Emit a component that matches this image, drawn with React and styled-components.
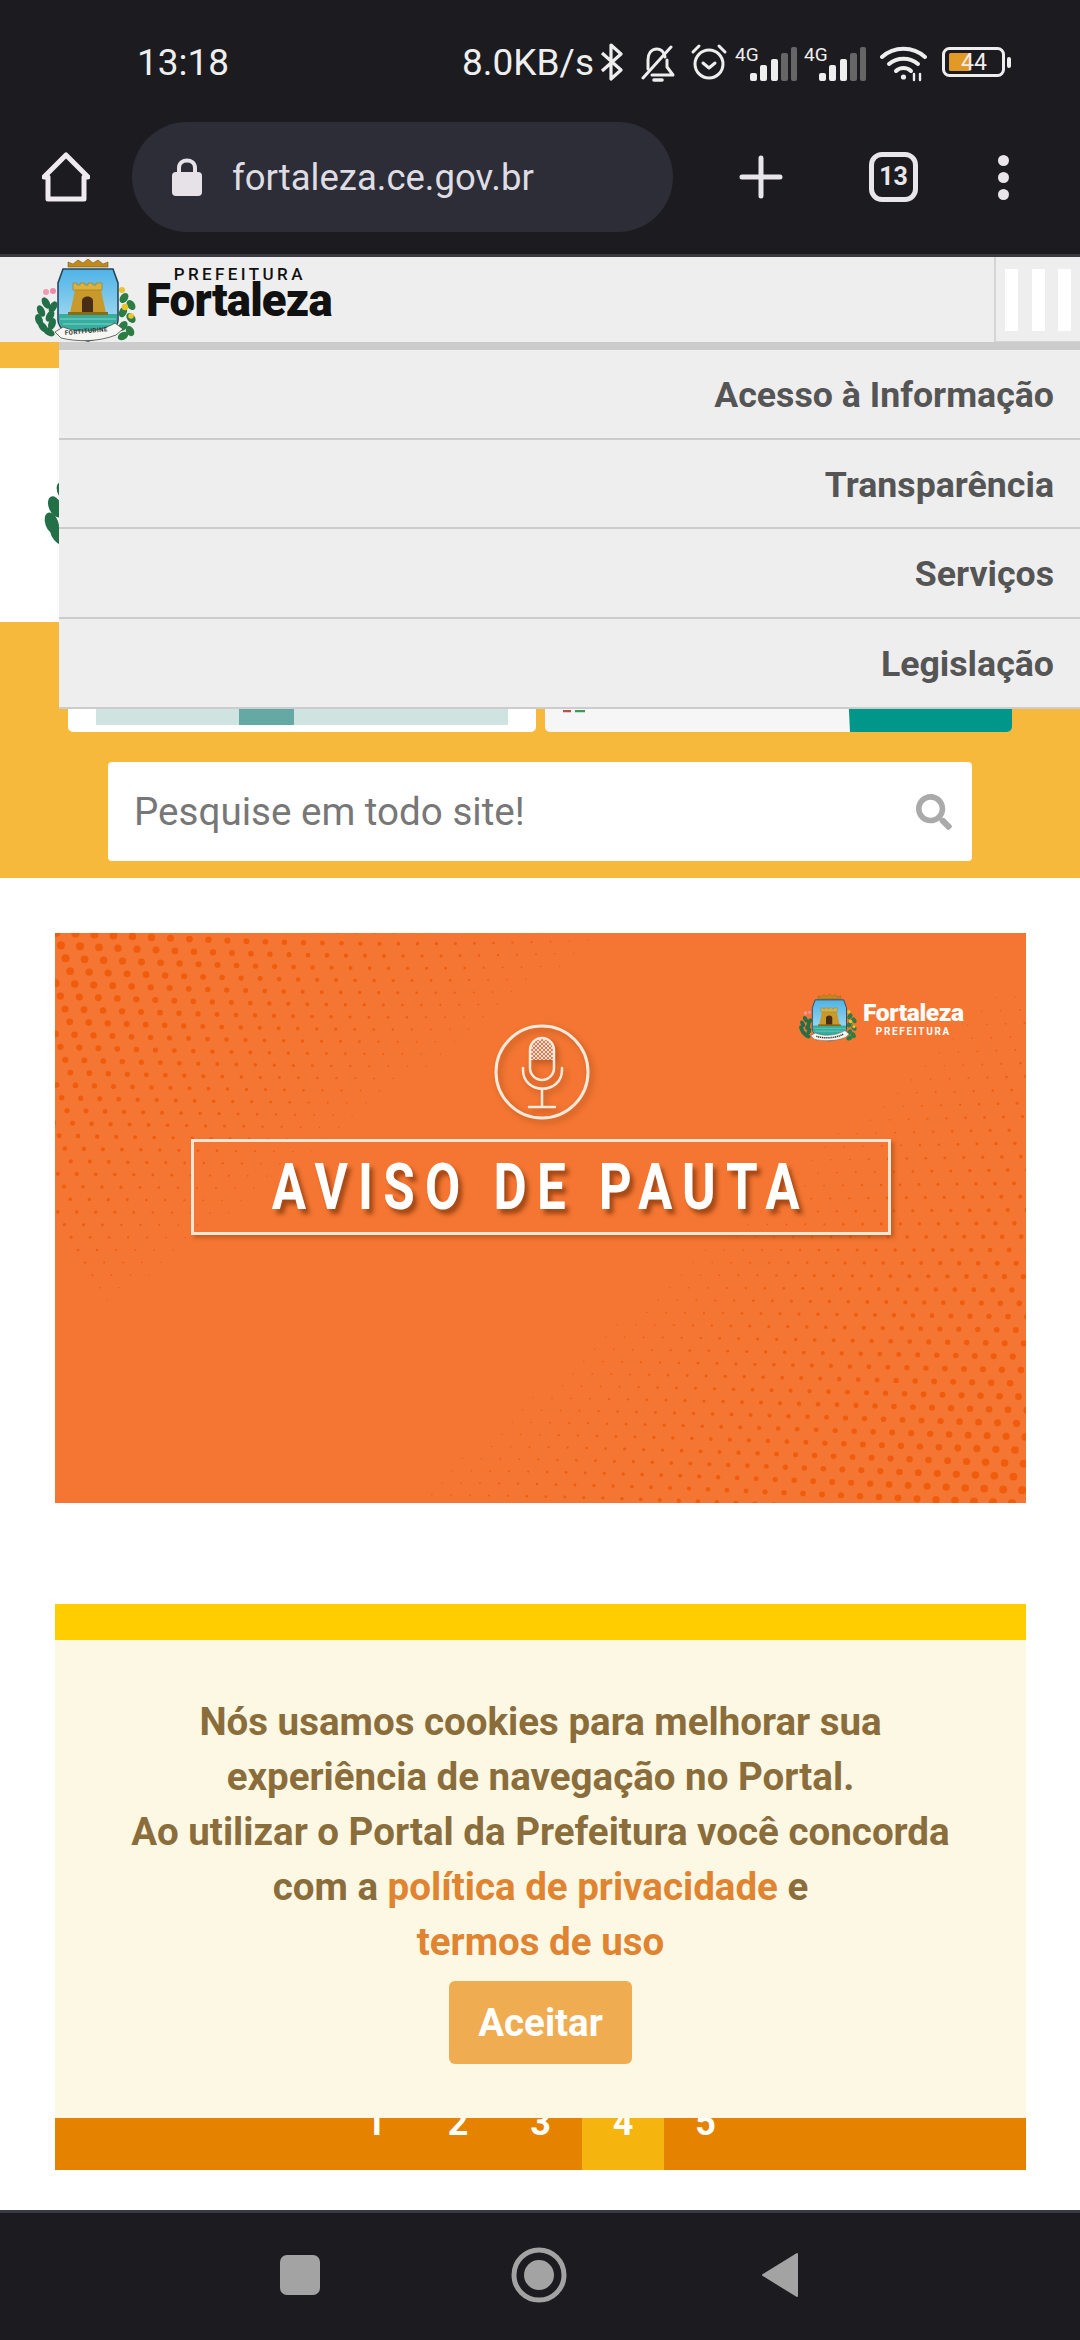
import React from 'react';
import styled, { createGlobalStyle } from 'styled-components';
import { FaSearch } from 'react-icons/fa';

const GlobalStyle = createGlobalStyle`
  html, body {
    margin: 0;
    padding: 0;
    background: #fff;
    font-family: Roboto, "Liberation Sans", sans-serif;
  }
`;

const Screen = styled.div`
  width: 1080px;
  height: 2340px;
  display: flex;
  flex-direction: column;
  overflow: hidden;
  background: #fff;
`;

/* android chrome */
const StatusBar = styled.div`
  height: 122px;
  flex: 0 0 122px;
  box-sizing: border-box;
  padding: 42px 0 0 137px;
  display: flex;
  align-items: flex-start;
  background: #1b1b20;
  color: #eeeeee;
  font-size: 37px;
  line-height: 42px;
`;
const Clock = styled.div`
  width: 325px;
`;
const Speed = styled.div`
  width: 138px;
`;
const StatusIcon = styled.svg`
  display: block;
  flex: none;
  margin-left: ${p => p.$gap || 0}px;
  margin-top: ${p => p.$top || 0}px;
`;
const Toolbar = styled.div`
  height: 135px;
  flex: 0 0 135px;
  box-sizing: border-box;
  padding: 0 0 22px 42px;
  display: flex;
  align-items: center;
  background: #1b1b20;
  border-bottom: 3px solid #3a3a42;
`;
const UrlPill = styled.div`
  width: 541px;
  height: 110px;
  margin: 0 66px 0 42px;
  padding-left: 40px;
  box-sizing: border-box;
  display: flex;
  align-items: center;
  gap: 30px;
  border-radius: 55px;
  background: #2d2d37;
  color: #dfdde3;
  font-size: 36.5px;
`;
const TabCount = styled.div`
  width: 49px;
  height: 50px;
  box-sizing: border-box;
  margin-left: 86px;
  border: 5px solid #e8e6ea;
  border-radius: 13px;
  color: #e8e6ea;
  font-size: 25px;
  font-weight: 700;
  line-height: 40px;
  text-align: center;
`;
const Dots = styled.div`
  margin-left: 80px;
  display: flex;
  flex-direction: column;
  gap: 6px;
`;
const Dot = styled.span`
  width: 11px;
  height: 11px;
  border-radius: 50%;
  background: #e8e6ea;
`;

/* web page */
const WebView = styled.div`
  position: relative;
  flex: 1;
  min-height: 0;
  overflow: hidden;
`;
const SiteHeader = styled.div`
  height: 85px;
  display: flex;
  align-items: stretch;
  background: #eeeeee;
`;
const Brand = styled.div`
  flex: 1;
  padding-left: 33px;
  display: flex;
  gap: 8px;
`;
const BrandText = styled.div`
  padding-top: 9px;
  display: flex;
  flex-direction: column;
  align-items: flex-end;
  color: #111;
`;
const BrandTop = styled.div`
  margin-right: 26px;
  font-size: 17px;
  line-height: 16px;
  font-weight: 500;
  letter-spacing: 3.4px;
`;
const BrandName = styled.div`
  font-size: 45.5px;
  line-height: 37px;
  font-weight: 900;
  letter-spacing: -0.8px;
`;
const Burger = styled.div`
  width: 86px;
  box-sizing: border-box;
  padding: 12px 9px 10px 9px;
  display: flex;
  justify-content: space-between;
  border-left: 2px solid #d5d5d5;
  border-bottom: 1px solid #d5d5d5;
`;
const BurgerBar = styled.span`
  width: 13px;
  background: #fff;
`;
const Menu = styled.div`
  position: absolute;
  top: 85px;
  left: 59px;
  right: 0;
  border-top: 8px solid #cccccc;
  background: #eeeeee;
  z-index: 2;
`;
const MenuItem = styled.div`
  height: 89.7px;
  box-sizing: border-box;
  padding: 2px 26px 0 0;
  display: flex;
  align-items: center;
  justify-content: flex-end;
  border-bottom: 2px solid #cccccc;
  color: #555555;
  font-size: 35.7px;
  font-weight: 700;
`;
const AccentStrip = styled.div`
  height: 26px;
  background: #f6b93b;
`;
const CrestRow = styled.div`
  height: 254px;
  box-sizing: border-box;
  padding: 41px 0 0 41px;
`;
const AccentSection = styled.div`
  height: 256px;
  box-sizing: border-box;
  padding-top: 4px;
  display: flex;
  flex-direction: column;
  background: #f6b93b;
`;
const CardRow = styled.div`
  height: 106px;
  padding: 0 68px;
  display: flex;
  gap: 9px;
`;
const Card = styled.div`
  width: 468px;
  height: 106px;
  box-sizing: border-box;
  position: relative;
  overflow: hidden;
  padding: 76px 0 0 28px;
  border-radius: 0 0 5px 5px;
  background: ${p => p.$tint || '#ffffff'};
`;
const Progress = styled.div`
  width: 412px;
  height: 23px;
  padding-left: 143px;
  box-sizing: border-box;
  background: #cfe3e1;
`;
const ProgressThumb = styled.div`
  width: 55px;
  height: 100%;
  background: #64a9a3;
`;
const CardTeal = styled.div`
  position: absolute;
  top: 0;
  right: 0;
  bottom: 0;
  width: 167px;
  background: #00968a;
  clip-path: polygon(0 0, 100% 0, 100% 100%, 3% 100%);
`;
const CardSprig = styled.svg`
  position: absolute;
  top: 84px;
  left: 16px;
`;
const Search = styled.div`
  width: 864px;
  height: 99px;
  box-sizing: border-box;
  margin: 30px 0 0 108px;
  padding: 0 20px 0 26px;
  display: flex;
  align-items: center;
  justify-content: space-between;
  border-radius: 4px;
  background: #ffffff;
  color: #777777;
  font-size: 38.6px;
  svg {
    color: #aaaaaa;
  }
`;
const Content = styled.div`
  padding: 55px 54px 0 55px;
`;
const Banner = styled.div`
  position: relative;
  height: 570px;
  overflow: hidden;
  background: #f47632;
`;
const BannerDots = styled.svg`
  position: absolute;
  inset: 0;
`;
const BannerCenter = styled.div`
  position: relative;
  height: 100%;
  box-sizing: border-box;
  padding: 90px 0 0 136px;
`;
const PautaBox = styled.div`
  width: 700px;
  height: 96px;
  box-sizing: border-box;
  margin-top: 12px;
  display: flex;
  align-items: center;
  justify-content: center;
  border: 3px solid #fbe6d6;
  box-shadow: 3px 3px 4px rgba(150, 60, 10, 0.45);
`;
const PautaText = styled.span`
  display: inline-block;
  transform: scaleX(0.787);
  white-space: nowrap;
  color: #fff;
  font-size: 65px;
  font-weight: 700;
  letter-spacing: 13px;
  text-shadow: 5px 5px 5px rgba(110, 40, 0, 0.6);
`;
const MicIcon = styled.svg`
  display: block;
  margin-left: 302px;
  filter: drop-shadow(3px 3px 3px rgba(120, 50, 10, 0.45));
`;
const BannerLogo = styled.div`
  position: absolute;
  top: 60px;
  left: 743px;
  display: flex;
  gap: 5px;
`;
const BannerLogoText = styled.div`
  display: flex;
  flex-direction: column;
  align-items: center;
  padding-top: 7px;
  color: #fff;
`;
const BannerLogoName = styled.div`
  font-size: 24.6px;
  line-height: 26px;
  font-weight: 900;
  letter-spacing: -0.4px;
`;
const BannerLogoTop = styled.div`
  font-size: 10px;
  line-height: 12px;
  font-weight: 700;
  letter-spacing: 1.7px;
`;
const Slider = styled.div`
  position: relative;
  height: 566px;
  margin-top: 101px;
  display: flex;
  flex-direction: column;
  justify-content: flex-end;
  background: #ffcd00;
`;
const Pager = styled.div`
  height: 82px;
  display: flex;
  justify-content: center;
  background: #e58200;
`;
const PagerItem = styled.div`
  width: 82.5px;
  padding-top: 17px;
  box-sizing: border-box;
  text-align: center;
  color: #fff;
  font-size: 36px;
  font-weight: 700;
  line-height: 36px;
  background: ${p => (p.$active ? '#f6b40e' : 'transparent')};
`;
const Cookie = styled.div`
  position: absolute;
  top: 36px;
  left: 0;
  right: 0;
  height: 478px;
  box-sizing: border-box;
  padding-top: 54px;
  display: flex;
  flex-direction: column;
  align-items: center;
  background: #fcf8e3;
  color: #8a6d3b;
  font-size: 38.5px;
  font-weight: 700;
  line-height: 55px;
  text-align: center;
`;
const CookieLink = styled.span`
  color: #e08431;
`;
const AcceptButton = styled.div`
  width: 183px;
  height: 83px;
  margin-top: 12px;
  display: flex;
  align-items: center;
  justify-content: center;
  border-radius: 6px;
  background: #efac50;
  color: #fff;
`;
const NavBar = styled.div`
  height: 130px;
  flex: 0 0 130px;
  box-sizing: border-box;
  display: flex;
  align-items: center;
  padding: 0 0 3px 280px;
  border-top: 3px solid #3a3a42;
  background: #1b1b20;
`;
const NavSquare = styled.div`
  width: 40px;
  height: 40px;
  border-radius: 7px;
  background: #a3a3a3;
`;
const NavIcon = styled.svg`
  display: block;
  margin-left: ${p => p.$gap}px;
`;
const CrestSvg = styled.svg`
  display: block;
  flex: none;
`;

const leftLeaves = [[13, 46, -30], [8, 54, -25], [6, 63, -20], [10, 70, -40], [16, 75, -60], [20, 50, 30], [17, 59, 30], [19, 67, 20]];
const rightLeaves = [[91, 41, 35], [98, 48, -35], [90, 55, 25], [98, 61, -40], [90, 69, 40], [97, 74, -30], [90, 79, 60]];

const Crest = ({ width, height, motto }) => (
  <CrestSvg width={width} height={height} viewBox="0 0 105 86">
    <defs>
      <linearGradient id="crestSky" x1="0" y1="0" x2="0" y2="1">
        <stop offset="0" stopColor="#4fb3e6" />
        <stop offset="1" stopColor="#bfe6f5" />
      </linearGradient>
    </defs>
    {/* wreath */}
    {leftLeaves.map(([x, y, r], i) => (
      <ellipse key={i} cx={x} cy={y} rx="3.6" ry="6.2" fill="#236f47" transform={`rotate(${r} ${x} ${y})`} />
    ))}
    <circle cx="13" cy="35" r="3" fill="#ee9cb4" />
    <circle cx="20" cy="34" r="3" fill="#f08aa8" />
    {rightLeaves.map(([x, y, r], i) => (
      <ellipse key={i} cx={x} cy={y} rx="3.8" ry="5.6" fill="#2c7d43" transform={`rotate(${r} ${x} ${y})`} />
    ))}
    <circle cx="89" cy="33" r="3" fill="#e8c42a" />
    <circle cx="92" cy="50" r="3.2" fill="#ecc52b" />
    <circle cx="98" cy="59" r="2.8" fill="#ecc52b" />
    {/* crown */}
    <path d="M35 10 L35 5 L40 7 L45 3 L50 6 L55 2 L60 6 L65 3 L70 7 L75 5 L75 10 Z" fill="#c08a1c" stroke="#7a5a12" strokeWidth="0.6" />
    {/* shield */}
    <path d="M30 12 L80 12 L85 26 L85 63 C85 72 72 80 55 84 C38 80 25 72 25 63 L25 26 Z" fill="url(#crestSky)" stroke="#27465e" strokeWidth="1.6" />
    <path d="M26 57 H84 V63 C84 71 72 79 55 83 C38 79 26 71 26 63 Z" fill="#36ae9f" />
    <path d="M27 62 H83 M30 67 H80" stroke="#7fd6c6" strokeWidth="1" />
    {/* tower */}
    <path d="M42 33 H68 L73 56 H37 Z" fill="#c79a2b" />
    <path d="M40 26 H44 V28 H47 V26 H52 V28 H55 V26 H60 V28 H63 V26 H69 V33 H40 Z" fill="#dcb13c" stroke="#8a6a14" strokeWidth="0.5" />
    <path d="M49 56 V44 C49 38 60 38 60 44 V56 Z" fill="#4a2d16" />
    <path d="M35 55 H75 V58 H35 Z" fill="#8a6a14" />
    {/* ribbon */}
    <path d="M22 75 L30 70 C45 76 65 76 82 66 L90 72 L83 78 C65 85 45 85 28 81 Z" fill="#f6f6f2" stroke="#4a4a48" strokeWidth="0.8" />
    {motto ? (
      <text x="32" y="78" fontSize="6.2" fontWeight="700" fill="#333" fontFamily="Roboto" letterSpacing="0.4" transform="rotate(-5 32 78)">FORTITUDINE</text>
    ) : (
      <path d="M32 76 C45 80 65 80 80 72" fill="none" stroke="#3a3a3a" strokeWidth="2.6" strokeDasharray="2.2 1.1" />
    )}
  </CrestSvg>
);

// halftone: dot size follows the distance to the top-left and bottom-right corners
const halftone = () => {
  const dots = [];
  const stepX = 19;
  const stepY = 13;
  for (let row = -2; row < 48; row++) {
    for (let col = -6; col < 62; col++) {
      const x = col * stepX + row * 6.7 + 6 - 30 * Math.sin(row / 14);
      const y = row * stepY + 5 + 18 * Math.sin((x + 120) / 300) * (1 - row / 24);
      const topLeft = 4.3 * (1 - (x / 640 + y / 480));
      const bottomRight = 4.2 * (1 - ((971 - x) / 720 + (570 - y) / 620));
      const r = Math.max(topLeft, bottomRight);
      if (r > 0.6) dots.push({ x, y, r: Math.min(r, 4.3) });
    }
  }
  return dots;
};
const bannerDots = halftone();

function SignalIcon({ gap }) {
  return (
    <StatusIcon width="62" height="40" viewBox="0 -4 62 40" $gap={gap} $top="-1">
      <text x="0" y="16" fill="#eee" fontSize="19" fontFamily="Roboto">4G</text>
      <rect x="15" y="28" width="7" height="8" rx="2" fill="#eee" />
      <rect x="25" y="20" width="7" height="16" rx="2" fill="#eee" />
      <rect x="36" y="14" width="7" height="22" rx="2" fill="#eee" />
      <rect x="46" y="8" width="7" height="28" rx="2" fill="#666" />
      <rect x="56" y="2" width="6" height="34" rx="2" fill="#666" />
    </StatusIcon>
  );
}

const App = () => (
  <Screen>
    <GlobalStyle />
    <StatusBar>
      <Clock>13:18</Clock>
      <Speed>8.0KB/s</Speed>
      <StatusIcon width="24" height="38" viewBox="0 0 24 38" $top="1" fill="none" stroke="#eee" strokeWidth="3.2" strokeLinejoin="round">
        <path d="M2 10 L21 27 L11 36 V2 L21 11 L2 28" />
      </StatusIcon>
      <StatusIcon width="36" height="38" viewBox="0 0 36 38" $gap="16" $top="3" fill="none" stroke="#eee" strokeWidth="3" strokeLinecap="round" strokeLinejoin="round">
        <path d="M25 12 C24 6 20 4 17 4 C11 4 8 9 8 15 V24" />
        <path d="M27 15 V22 L33 30 H12" />
        <path d="M3 33 L31 2" />
        <path d="M14 35 H22" strokeWidth="3.6" />
      </StatusIcon>
      <StatusIcon width="38" height="38" viewBox="0 0 38 38" $gap="14" $top="1" fill="none" stroke="#eee" strokeWidth="3" strokeLinecap="round" strokeLinejoin="round">
        <circle cx="19" cy="21" r="14" />
        <path d="M13 20 L19 25 L25 20" />
        <path d="M3 9 L9 3 M35 9 L29 3" />
      </StatusIcon>
      <SignalIcon gap={7} />
      <SignalIcon gap={7} />
      <StatusIcon width="47" height="36" viewBox="0 0 47 36" $gap="14" $top="4" fill="none" stroke="#eee" strokeWidth="4" strokeLinecap="round">
        <path d="M2 11 C14 0 33 0 45 11" />
        <path d="M9 18 C17 11 30 11 38 18" />
        <path d="M16 25 C20 21 27 21 31 25" />
        <circle cx="23.5" cy="31" r="2.6" fill="#eee" stroke="none" />
        <path d="M34 34 V28 M40 34 V28" strokeWidth="2.4" />
      </StatusIcon>
      <StatusIcon width="69" height="30" viewBox="0 0 69 30" $gap="15" $top="5">
        <rect x="1.5" y="1.5" width="60" height="27" rx="6" fill="none" stroke="#eee" strokeWidth="3" />
        <rect x="7" y="6" width="22" height="18" rx="1.5" fill="#e09a25" />
        <rect x="65" y="10" width="4" height="11" rx="2" fill="#eee" />
        <text x="32" y="23" textAnchor="middle" fill="#eee" fontSize="23" fontFamily="Roboto">44</text>
      </StatusIcon>
    </StatusBar>
    <Toolbar>
      <svg width="48" height="50" viewBox="0 0 48 50" fill="none" stroke="#eeeaee" strokeWidth="5" strokeLinejoin="round" strokeLinecap="round">
        <path d="M2 25 L24 3 L46 25 H42 V47 H6 V25 Z" />
      </svg>
      <UrlPill>
        <svg width="30" height="38" viewBox="0 0 30 38" fill="none">
          <path d="M7 15 V10 C7 0 23 0 23 10 V15" stroke="#e6e2e8" strokeWidth="4" />
          <rect x="0" y="14" width="30" height="24" rx="4" fill="#e6e2e8" />
        </svg>
        fortaleza.ce.gov.br
      </UrlPill>
      <svg width="44" height="44" viewBox="0 0 44 44" stroke="#e8e6ea" strokeWidth="5" strokeLinecap="round">
        <path d="M22 3 V41 M3 22 H41" />
      </svg>
      <TabCount>13</TabCount>
      <Dots>
        <Dot />
        <Dot />
        <Dot />
      </Dots>
    </Toolbar>
    <WebView>
      <SiteHeader>
        <Brand>
          <Crest width={105} height={86} motto />
          <BrandText>
            <BrandTop>PREFEITURA</BrandTop>
            <BrandName>Fortaleza</BrandName>
          </BrandText>
        </Brand>
        <Burger>
          <BurgerBar />
          <BurgerBar />
          <BurgerBar />
        </Burger>
      </SiteHeader>
      <Menu>
        <MenuItem>Acesso à Informação</MenuItem>
        <MenuItem>Transparência</MenuItem>
        <MenuItem>Serviços</MenuItem>
        <MenuItem>Legislação</MenuItem>
      </Menu>
      <AccentStrip />
      <CrestRow>
        <Crest width={190} height={156} />
      </CrestRow>
      <AccentSection>
        <CardRow>
          <Card>
            <Progress>
              <ProgressThumb />
            </Progress>
          </Card>
          <Card $tint="#f6f6f7">
            <CardSprig width="28" height="6" viewBox="0 0 28 6">
              <path d="M2 1 H10" stroke="#b5534f" strokeWidth="2.4" />
              <path d="M14 1 H24" stroke="#3f9a57" strokeWidth="2.4" />
            </CardSprig>
            <CardTeal />
          </Card>
        </CardRow>
        <Search>
          Pesquise em todo site!
          <FaSearch size={36} />
        </Search>
      </AccentSection>
      <Content>
        <Banner>
          <BannerDots width="971" height="570" viewBox="0 0 971 570">
            {bannerDots.map((d, i) => (
              <circle key={i} cx={d.x} cy={d.y} r={d.r} fill="#f05c0c" />
            ))}
          </BannerDots>
          <BannerCenter>
            <MicIcon width="104" height="104" viewBox="0 0 104 104" fill="none" stroke="#fbe9dc" strokeLinecap="round">
              <defs>
                <pattern id="micMesh" width="4" height="4" patternUnits="userSpaceOnUse">
                  <rect width="4" height="4" fill="#f9dccb" stroke="none" />
                  <rect width="2" height="2" fill="#cf7d55" stroke="none" />
                  <rect x="2" y="2" width="2" height="2" fill="#cf7d55" stroke="none" />
                </pattern>
              </defs>
              <circle cx="49" cy="49" r="46" strokeWidth="3" />
              <path d="M38 37 V27 C38 11 60 11 60 27 V37 Z" fill="url(#micMesh)" stroke="none" />
              <rect x="37" y="15" width="24" height="42" rx="12" strokeWidth="2.5" />
              <path d="M30 45 V47 C30 72 69 72 69 47 V45" strokeWidth="2.5" />
              <path d="M49 66 V83 M36 84 H62" strokeWidth="2.5" />
            </MicIcon>
            <PautaBox>
              <PautaText>AVISO DE PAUTA</PautaText>
            </PautaBox>
          </BannerCenter>
          <BannerLogo>
            <Crest width={60} height={49} />
            <BannerLogoText>
              <BannerLogoName>Fortaleza</BannerLogoName>
              <BannerLogoTop>PREFEITURA</BannerLogoTop>
            </BannerLogoText>
          </BannerLogo>
        </Banner>
        <Slider>
          <Pager>
            {[1, 2, 3, 4, 5].map(n => (
              <PagerItem key={n} $active={n === 4}>{n}</PagerItem>
            ))}
          </Pager>
          <Cookie>
            <div>Nós usamos cookies para melhorar sua</div>
            <div>experiência de navegação no Portal.</div>
            <div>Ao utilizar o Portal da Prefeitura você concorda</div>
            <div>com a <CookieLink>política de privacidade</CookieLink> e</div>
            <CookieLink>termos de uso</CookieLink>
            <AcceptButton>Aceitar</AcceptButton>
          </Cookie>
        </Slider>
      </Content>
    </WebView>
    <NavBar>
      <NavSquare />
      <NavIcon width="56" height="56" viewBox="0 0 56 56" $gap={191} fill="none">
        <circle cx="28" cy="28" r="25" stroke="#a3a3a3" strokeWidth="5" />
        <circle cx="28" cy="28" r="15" fill="#a3a3a3" />
      </NavIcon>
      <NavIcon width="37" height="46" viewBox="0 0 37 46" $gap={194}>
        <path d="M36 2 V44 L2 23 Z" fill="#a3a3a3" stroke="#a3a3a3" strokeWidth="2" strokeLinejoin="round" />
      </NavIcon>
    </NavBar>
  </Screen>
);

export default App;
